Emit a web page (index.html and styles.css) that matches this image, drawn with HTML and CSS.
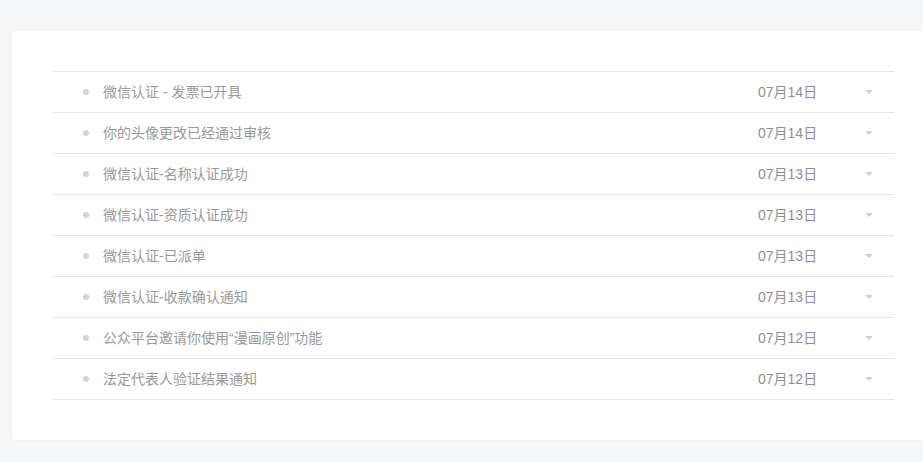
FILE: index.html
```html
<!DOCTYPE html>
<html lang="zh-CN">
<head>
<meta charset="utf-8">
<title>消息列表</title>
<link rel="stylesheet" href="styles.css">
</head>
<body>
<div class="card">
  <ul class="msg-list">
    <li class="msg"><span class="dot"></span><span class="title">微信认证 - 发票已开具</span><span class="date">07月14日</span><span class="arrow"></span></li>
    <li class="msg"><span class="dot"></span><span class="title">你的头像更改已经通过审核</span><span class="date">07月14日</span><span class="arrow"></span></li>
    <li class="msg"><span class="dot"></span><span class="title">微信认证-名称认证成功</span><span class="date">07月13日</span><span class="arrow"></span></li>
    <li class="msg"><span class="dot"></span><span class="title">微信认证-资质认证成功</span><span class="date">07月13日</span><span class="arrow"></span></li>
    <li class="msg"><span class="dot"></span><span class="title">微信认证-已派单</span><span class="date">07月13日</span><span class="arrow"></span></li>
    <li class="msg"><span class="dot"></span><span class="title">微信认证-收款确认通知</span><span class="date">07月13日</span><span class="arrow"></span></li>
    <li class="msg"><span class="dot"></span><span class="title">公众平台邀请你使用“漫画原创”功能</span><span class="date">07月12日</span><span class="arrow"></span></li>
    <li class="msg"><span class="dot"></span><span class="title">法定代表人验证结果通知</span><span class="date">07月12日</span><span class="arrow"></span></li>
  </ul>
</div>
</body>
</html>
```
FILE: styles.css
```css
html, body {
  margin: 0;
  padding: 0;
  overflow: hidden;
}
body {
  background: #f6f7f9;
  padding: 31px 0 0 12px;
  font-family: "Liberation Sans", "Noto Sans CJK SC", sans-serif;
  height: 462px;
  box-sizing: border-box;
}
.card {
  width: 922px;
  background: #fff;
  border-radius: 4px;
  box-shadow: 0 1px 3px rgba(0, 0, 0, 0.03);
  padding: 40px 40px;
  box-sizing: border-box;
}
.msg-list {
  list-style: none;
  margin: 0;
  padding: 0;
  border-top: 1px solid #e6e6e6;
}
.msg {
  display: flex;
  align-items: center;
  height: 40px;
  border-bottom: 1px solid #e6e6e6;
  padding-left: 31px;
  font-size: 14px;
  color: #999;
}
.dot {
  width: 6px;
  height: 6px;
  border-radius: 50%;
  background: #d4d4d4;
  margin-right: 14px;
  flex: none;
}
.title {
  flex: 1;
  white-space: nowrap;
  margin-bottom: 2px;
}
.date {
  width: 60px;
  color: #8f8f8f;
  white-space: nowrap;
  margin-bottom: 2px;
}
.arrow {
  width: 0;
  height: 0;
  border-left: 4px solid transparent;
  border-right: 4px solid transparent;
  border-top: 4px solid #cfcfcf;
  margin-left: 47px;
  margin-right: 21px;
  flex: none;
}
```
